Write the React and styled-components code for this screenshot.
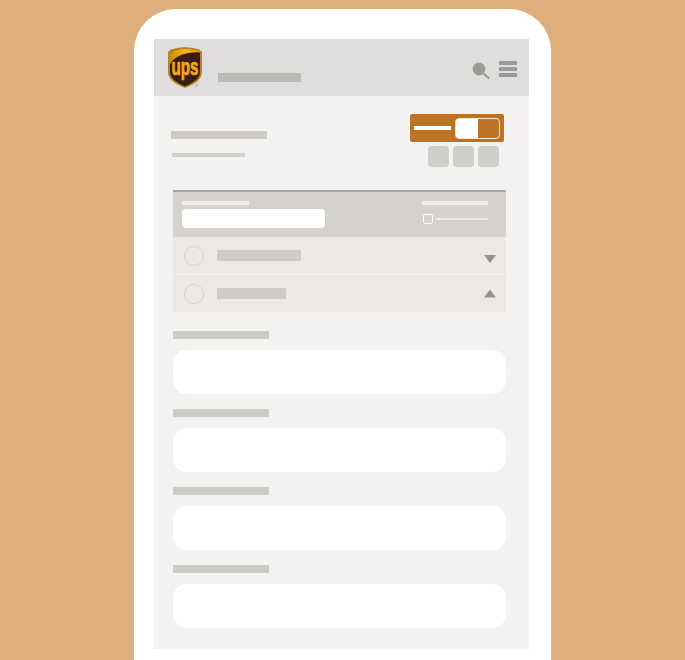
import React from "react";
import styled, { createGlobalStyle } from "styled-components";

const GlobalStyle = createGlobalStyle`
  html, body {
    margin: 0;
    padding: 0;
    background: #deae7c;
    font-family: "Liberation Sans", Arial, sans-serif;
  }
`;

function UpsLogo() {
  return (
    <LogoSvg viewBox="0 0 34 41" aria-label="UPS">
      <defs>
        <linearGradient id="gold" x1="0" y1="0.2" x2="1" y2="0.2">
          <stop offset="0" stopColor="#c98a14" />
          <stop offset="0.5" stopColor="#f7b315" />
          <stop offset="1" stopColor="#e9a30f" />
        </linearGradient>
      </defs>
      <path
        d="M17 0.3C10.5 0.3 4.5 1.4 0.6 4.2C0.2 4.5 0 5 0 5.6V24.5C0 32 5.5 36.2 17 41C28.5 36.2 34 32 34 24.5V5.6C34 5 33.8 4.5 33.4 4.2C29.5 1.4 23.5 0.3 17 0.3Z"
        fill="#b5851f"
      />
      <path
        d="M17 1.8C11.4 1.8 6 2.8 2 5.4V24.4C2 30.8 6.6 34.8 17 39.2C27.4 34.8 32 30.8 32 24.4V5.4C28 2.8 22.6 1.8 17 1.8Z"
        fill="#3a1c10"
      />
      <path
        d="M32 4.9C29 3 23 1.8 17 1.8C11.4 1.8 6 2.8 2 5.4V17.5C3 14.5 6 11.5 10 9.4C16 6.2 25 5 32 5.4Z"
        fill="url(#gold)"
      />
      <UpsMark x="17" y="28" textLength="27" lengthAdjust="spacingAndGlyphs">
        ups
      </UpsMark>
      <Registered x="27" y="39.5">
        ®
      </Registered>
    </LogoSvg>
  );
}

function SearchIcon() {
  return (
    <SearchSvg viewBox="0 0 18 18">
      <circle cx="7" cy="7" r="6.4" fill="#9b9a96" />
      <path d="M11 11L17 16.5" stroke="#9b9a96" strokeWidth="2.2" />
    </SearchSvg>
  );
}

const fields = [0, 1, 2, 3];

export default function App() {
  return (
    <>
      <GlobalStyle />
      <Page>
        <Phone>
          <Screen>
            <Header>
              <UpsLogo />
              <HeaderBar />
              <HeaderIcons>
                <SearchIcon />
                <Menu>
                  <MenuLine />
                  <MenuLine />
                  <MenuLine />
                </Menu>
              </HeaderIcons>
            </Header>
            <Content>
              <TopRow>
                <TitleBlock>
                  <Title />
                  <Subtitle />
                </TitleBlock>
                <Controls>
                  <Toggle>
                    <ToggleLine />
                    <Switch>
                      <SwitchOn />
                    </Switch>
                  </Toggle>
                  <SquareRow>
                    <Square />
                    <Square />
                    <Square />
                  </SquareRow>
                </Controls>
              </TopRow>

              <Table>
                <TableHead>
                  <HeadLeft>
                    <HeadLabel $width={67} />
                    <HeadInput />
                  </HeadLeft>
                  <HeadRight>
                    <HeadLabel $width={66} />
                    <CheckRow>
                      <Check />
                      <CheckLine />
                    </CheckRow>
                  </HeadRight>
                </TableHead>
                <Row>
                  <RowCircle />
                  <RowBar $width={84} />
                  <Caret />
                </Row>
                <Row>
                  <RowCircle />
                  <RowBar $width={69} />
                  <Caret $up />
                </Row>
              </Table>

              <Fields>
                {fields.map((f) => (
                  <Field key={f}>
                    <FieldLabel />
                    <FieldInput />
                  </Field>
                ))}
              </Fields>
            </Content>
          </Screen>
        </Phone>
      </Page>
    </>
  );
}

const Page = styled.div`
  width: 685px;
  height: 660px;
  overflow: hidden;
  padding-top: 9px;
  box-sizing: border-box;
`;

const Phone = styled.div`
  width: 417px;
  height: 651px;
  margin: 0 auto;
  box-sizing: border-box;
  padding: 30px 22px 0 20px;
  background: #fff;
  border-radius: 42px 42px 0 0;
`;

const Screen = styled.div`
  height: 610px;
  background: #f3f2f0;
`;

const Header = styled.div`
  height: 57px;
  display: flex;
  align-items: flex-start;
  padding: 8px 12px 0 14px;
  box-sizing: border-box;
  background: #dfdedc;
`;

const LogoSvg = styled.svg`
  width: 34px;
  height: 41px;
  flex: none;
  overflow: visible;
`;

const UpsMark = styled.text`
  font-family: "Liberation Sans", Arial, sans-serif;
  font-weight: 700;
  font-size: 24px;
  text-anchor: middle;
  fill: #f4aa18;
  stroke: #f4aa18;
  stroke-width: 0.7px;
`;

const Registered = styled.text`
  font-family: "Liberation Sans", Arial, sans-serif;
  font-size: 4px;
  fill: #75654a;
`;

const HeaderBar = styled.div`
  width: 83px;
  height: 9px;
  margin: 26px 0 0 16px;
  background: #bcbab6;
`;

const HeaderIcons = styled.div`
  margin-left: auto;
  display: flex;
  align-items: flex-start;
  gap: 10px;
  padding-top: 14px;
`;

const SearchSvg = styled.svg`
  width: 18px;
  height: 18px;
  margin: 1px -1px 0 0;
`;

const Menu = styled.div`
  display: flex;
  flex-direction: column;
  gap: 2px;
`;

const MenuLine = styled.div`
  width: 18px;
  height: 4px;
  background: #9b9a96;
`;

const Content = styled.div`
  padding: 18px 23px 0 17px;
`;

const TopRow = styled.div`
  display: flex;
  justify-content: space-between;
  padding-right: 2px;
`;

const TitleBlock = styled.div`
  padding-top: 17px;
`;

const Title = styled.div`
  width: 96px;
  height: 8px;
  background: #cecbc6;
`;

const Subtitle = styled.div`
  width: 73px;
  height: 4px;
  margin: 14px 0 0 1px;
  background: #d2cfca;
`;

const Controls = styled.div`
  display: flex;
  flex-direction: column;
  align-items: flex-end;
`;

const Toggle = styled.div`
  width: 94px;
  height: 28px;
  box-sizing: border-box;
  display: flex;
  align-items: center;
  padding: 0 4px;
  gap: 4px;
  border-radius: 2px;
  background: #bd7326;
`;

const ToggleLine = styled.div`
  width: 37px;
  height: 4px;
  background: #fff;
`;

const Switch = styled.div`
  width: 45px;
  height: 21px;
  box-sizing: border-box;
  border: 1px solid #f6e6d2;
  border-radius: 4px;
  overflow: hidden;
`;

const SwitchOn = styled.div`
  width: 22px;
  height: 100%;
  background: #fff;
`;

const SquareRow = styled.div`
  display: flex;
  gap: 4px;
  margin: 4px 5px 0 0;
`;

const Square = styled.div`
  width: 21px;
  height: 21px;
  border-radius: 4px;
  background: #d0cecb;
`;

const Table = styled.div`
  margin: 23px 0 0 2px;
  width: 333px;
`;

const TableHead = styled.div`
  height: 47px;
  box-sizing: border-box;
  display: flex;
  justify-content: space-between;
  padding: 9px 18px 0 9px;
  border-top: 2px solid #a9a7a1;
  background: #d5d2cd;
`;

const HeadLeft = styled.div``;

const HeadRight = styled.div``;

const HeadLabel = styled.div`
  width: ${(p) => p.$width}px;
  height: 4px;
  background: #efedea;
`;

const HeadInput = styled.div`
  width: 143px;
  height: 19px;
  margin-top: 4px;
  border-radius: 4px;
  background: #fff;
`;

const CheckRow = styled.div`
  display: flex;
  align-items: center;
  gap: 3px;
  margin: 9px 0 0 1px;
`;

const Check = styled.div`
  width: 10px;
  height: 10px;
  box-sizing: border-box;
  border: 1px solid #fff;
  border-radius: 2px;
`;

const CheckLine = styled.div`
  width: 52px;
  height: 2px;
  background: #efedea;
`;

const Row = styled.div`
  height: 38px;
  box-sizing: border-box;
  display: flex;
  align-items: center;
  padding: 0 10px 0 11px;
  border-bottom: 1px solid #f5f3f1;
  background: #ebe8e6;
  &:last-child {
    border-bottom: none;
    height: 37px;
  }
`;

const RowCircle = styled.div`
  width: 20px;
  height: 20px;
  box-sizing: border-box;
  border: 1px solid #d5d2cd;
  border-radius: 50%;
`;

const RowBar = styled.div`
  width: ${(p) => p.$width}px;
  height: 11px;
  margin-left: 13px;
  background: #cfccc7;
`;

const Caret = styled.div`
  margin: ${(p) => (p.$up ? "0" : "7px")} 0 0 auto;
  width: 12px;
  height: 8px;
  background: #95938d;
  clip-path: ${(p) =>
    p.$up
      ? "polygon(50% 0, 100% 100%, 0 100%)"
      : "polygon(0 0, 100% 0, 50% 100%)"};
`;

const Fields = styled.div`
  width: 333px;
  margin: 19px 0 0 2px;
  display: flex;
  flex-direction: column;
  gap: 15px;
`;

const Field = styled.div``;

const FieldLabel = styled.div`
  width: 96px;
  height: 8px;
  background: #cdcbc6;
`;

const FieldInput = styled.div`
  height: 44px;
  margin-top: 11px;
  border-radius: 14px;
  background: #fff;
`;
